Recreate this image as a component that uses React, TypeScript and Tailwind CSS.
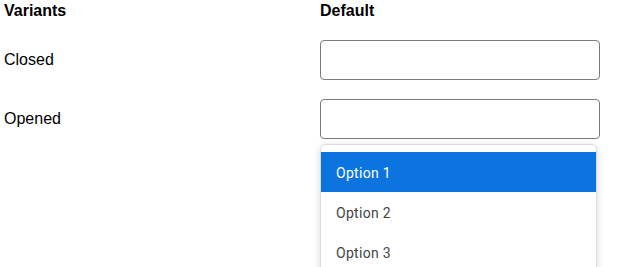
import React from "react";

export default function App() {
  const label = "text-[16px] leading-[18px] text-black";
  return (
    <div className="w-[620px] h-[267px] overflow-hidden bg-white relative" style={{ fontFamily: '"Liberation Sans", Arial, sans-serif' }}>
      <div className="grid grid-cols-[316px_280px] pl-[4px] pt-[2px]">
        <div className={`${label} font-bold`}>Variants</div>
        <div className={`${label} font-bold`}>Default</div>

        <div className={`${label} self-center mt-[20px]`}>Closed</div>
        <div className="mt-[20px] h-[40px] rounded-[4px] border border-[#7a7a7a] bg-white" />

        <div className={`${label} self-center mt-[19px]`}>Opened</div>
        <div className="mt-[19px] relative">
          <div className="h-[40px] rounded-[4px] border border-[#7a7a7a] bg-white" />
          <div
            className="absolute left-0 top-[45px] w-[277px] rounded-[5px] border border-[#dcdcdc] bg-white pt-[7px] shadow-[0_2px_8px_rgba(0,0,0,0.15)] overflow-hidden"
            style={{ fontFamily: 'Roboto, "Noto Sans", sans-serif' }}
          >
            <div className="h-[40px] flex items-center pl-[15px] pt-[2px] bg-[#0b74de] text-white text-[14px] tracking-[0.3px]">Option 1</div>
            <div className="h-[40px] flex items-center pl-[15px] pt-[2px] text-[#444] text-[14px] tracking-[0.3px]">Option 2</div>
            <div className="h-[40px] flex items-center pl-[15px] pt-[2px] text-[#444] text-[14px] tracking-[0.3px]">Option 3</div>
          </div>
        </div>
      </div>
    </div>
  );
}
